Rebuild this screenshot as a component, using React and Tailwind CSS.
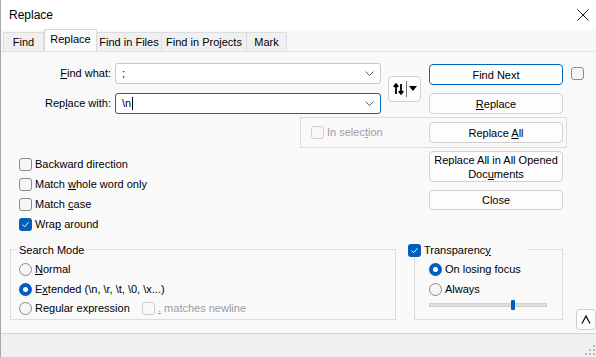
import React from "react";

function Check({ checked, disabled }) {
  if (checked) {
    return (
      <span className="w-[13px] h-[13px] rounded-[3px] bg-[#005fb8] flex items-center justify-center shrink-0">
        <svg width="9" height="9" viewBox="0 0 9 9">
          <path d="M1.5 4.6l2.1 2.1 3.9-4.4" fill="none" stroke="#ffffff" strokeWidth="1" />
        </svg>
      </span>
    );
  }
  return (
    <span
      className={
        disabled
          ? "block w-[13px] h-[13px] rounded-[3px] border border-[#cfcfcf] shrink-0"
          : "block w-[13px] h-[13px] rounded-[3px] border border-[#8a8a8a] bg-[#f6f6f6] shrink-0"
      }
    />
  );
}

function Radio({ on }) {
  if (on) {
    return (
      <span className="w-[13px] h-[13px] rounded-full bg-[#005fb8] flex items-center justify-center shrink-0">
        <span className="w-[5px] h-[5px] rounded-full bg-white" />
      </span>
    );
  }
  return <span className="block w-[13px] h-[13px] rounded-full border border-[#8a8a8a] bg-[#f6f6f6] shrink-0" />;
}

function Btn({ children, className }) {
  return (
    <div
      className={
        "w-[134px] flex items-center justify-center text-center leading-[14px] rounded-[4px] border bg-[#fdfdfd] " +
        className
      }
    >
      {children}
    </div>
  );
}

function Chevron() {
  return (
    <svg width="9" height="5" viewBox="0 0 9 5" className="mr-[6px]">
      <path d="M0.5 0.5l4 4 4-4" fill="none" stroke="#5a5a5a" strokeWidth="1" />
    </svg>
  );
}

function Row({ children }) {
  return <div className="h-[20px] flex items-center gap-[3px]">{children}</div>;
}

export default function App() {
  return (
    <div className="w-[596px] h-[357px] flex flex-col bg-white border-l border-[#a9a9a9] text-[11px] text-black font-['Liberation_Sans',Arial,sans-serif] overflow-hidden">
      {/* title bar */}
      <div className="h-[30px] flex items-center justify-between pl-[8px] pr-[6px] shrink-0">
        <span className="text-[12px]">Replace</span>
        <svg width="12" height="12" viewBox="0 0 12 12" className="mr-[1px]">
          <path d="M0.5 0.5l11 11M11.5 0.5l-11 11" stroke="#1a1a1a" strokeWidth="1" />
        </svg>
      </div>

      {/* tabs */}
      <div className="h-[21px] flex items-end pl-[2px] bg-[#f7f7f7] shrink-0">
        <div className="w-[41px] h-[19px] flex items-center justify-center bg-[#f0f0f0] border border-b-0 border-[#dddddd]">Find</div>
        <div className="w-[53px] h-[22px] flex items-center justify-center bg-[#fbfbfb] border border-b-0 border-[#d8d8d8] pb-[2px]">Replace</div>
        <div className="w-[65px] h-[19px] flex items-center justify-center bg-[#f0f0f0] border border-b-0 border-l-0 border-[#dddddd]">Find in Files</div>
        <div className="w-[85px] h-[19px] flex items-center justify-center bg-[#f0f0f0] border border-b-0 border-l-0 border-[#dddddd]">Find in Projects</div>
        <div className="w-[40px] h-[19px] flex items-center justify-center bg-[#f0f0f0] border border-b-0 border-l-0 border-[#dddddd]">Mark</div>
      </div>

      {/* tab page */}
      <div className="relative flex-1 flex flex-col bg-[#f9f9f9] border-t border-[#e3e3e3]">
        {/* In selection group frame, sits behind Replace All */}
        <div className="absolute left-[299px] top-[65px] w-[267px] h-[31px] border border-[#dcdcdc] flex items-center pl-[10px] gap-[3px] text-[#9d9d9d]">
          <Check disabled />
          <span>
            In selec<u>t</u>ion
          </span>
        </div>

        <div className="flex pt-[11px]">
          <div className="w-[428px]">
            <div className="flex items-center">
              <div className="flex flex-col gap-[9px]">
                <div className="flex items-center">
                  <span className="w-[110px] text-right">
                    <u>F</u>ind what:
                  </span>
                  <div className="ml-[4px] w-[266px] h-[21px] bg-white border border-[#c8c8c8] rounded-[3px] flex items-center justify-between pl-[6px]">
                    <span>;</span>
                    <Chevron />
                  </div>
                </div>
                <div className="flex items-center">
                  <span className="w-[110px] text-right">
                    Rep<u>l</u>ace with:
                  </span>
                  <div className="ml-[4px] w-[266px] h-[21px] bg-white border border-[#0067c0] rounded-[3px] flex items-center justify-between pl-[6px]">
                    <span className="flex items-center">
                      \n<span className="ml-[1px] w-[1px] h-[13px] bg-black" />
                    </span>
                    <Chevron />
                  </div>
                </div>
              </div>
              <div className="ml-[7px] w-[33px] h-[26px] rounded-[4px] border border-[#d0d0d0] bg-[#fdfdfd] flex items-center justify-center gap-[2px]">
                <svg width="11" height="12" viewBox="0 0 11 12">
                  <path d="M3 11V1.5M0.8 3.8L3 1.2l2.2 2.6" fill="none" stroke="#000" strokeWidth="1.8" />
                  <path d="M8 1v9.5M5.8 8.2L8 10.8l2.2-2.6" fill="none" stroke="#000" strokeWidth="1.8" />
                </svg>
                <span className="w-[1px] h-[16px] bg-[#707070]" />
                <svg width="8" height="5" viewBox="0 0 8 5">
                  <path d="M0 0h8L4 5z" fill="#000" />
                </svg>
              </div>
            </div>

            <div className="mt-[40px] pl-[18px] flex flex-col">
              <Row>
                <Check />
                <span>Backward direction</span>
              </Row>
              <Row>
                <Check />
                <span>
                  Match <u>w</u>hole word only
                </span>
              </Row>
              <Row>
                <Check />
                <span>
                  Match <u>c</u>ase
                </span>
              </Row>
              <Row>
                <Check checked />
                <span>
                  Wra<u>p</u> around
                </span>
              </Row>
            </div>
          </div>

          <div className="relative flex flex-col gap-[8px] pt-[1px]">
            <Btn className="h-[21px] border-[#0067c0]">Find Next</Btn>
            <Btn className="h-[21px] border-[#d0d0d0]">
              <span>
                <u>R</u>eplace
              </span>
            </Btn>
            <Btn className="h-[21px] border-[#d0d0d0]">
              <span>
                Replace <u>A</u>ll
              </span>
            </Btn>
            <Btn className="h-[31px] border-[#d0d0d0]">
              <span>
                Replace All in All Opened
                <br />
                Doc<u>u</u>ments
              </span>
            </Btn>
            <Btn className="h-[20px] border-[#d0d0d0]">Close</Btn>
          </div>
          <div className="ml-[8px] mt-[4px]">
            <Check />
          </div>
        </div>

        {/* lower groups */}
        <div className="mt-[15px] flex items-start pl-[9px] h-[81px]">
          <div className="relative w-[386px] h-[71px] border border-[#dcdcdc] pt-[9px] pl-[8px]">
            <span className="absolute -top-[8px] left-[6px] px-[2px] bg-[#f9f9f9]">Search Mode</span>
            <Row>
              <Radio />
              <span>
                <u>N</u>ormal
              </span>
            </Row>
            <Row>
              <Radio on />
              <span>
                E<u>x</u>tended (\n, \r, \t, \0, \x...)
              </span>
            </Row>
            <div className="h-[19px] flex items-center gap-[3px]">
              <Radio />
              <span className="w-[104px]">
                Re<u>g</u>ular expression
              </span>
              <Check disabled />
              <span className="text-[#9d9d9d]">
                <u>.</u> matches newline
              </span>
            </div>
          </div>

          <div className="relative ml-[18px] w-[149px] h-[71px] border border-[#dcdcdc] pt-[9px] pl-[14px]">
            <div className="absolute -top-[7px] -left-[7px] w-[120px] h-[14px] bg-[#f9f9f9] flex items-center gap-[3px]">
              <Check checked />
              <span>
                Transparenc<u>y</u>
              </span>
            </div>
            <Row>
              <Radio on />
              <span>On losing focus</span>
            </Row>
            <Row>
              <Radio />
              <span>Always</span>
            </Row>
            <div className="relative mt-[4px] w-[118px] h-[4px] bg-[#dedede] border border-[#d0d0d0]">
              <span className="absolute left-[81px] -top-[4px] w-[4px] h-[10px] bg-[#005fb8] rounded-[1px]" />
            </div>
          </div>

          <div className="self-end ml-[13px] w-[20px] h-[21px] rounded-[4px] border border-[#d0d0d0] bg-[#fdfdfd] flex items-center justify-center">
            <svg width="10" height="9" viewBox="0 0 10 9">
              <path d="M1 8.5L5 1l4 7.5" fill="none" stroke="#000" strokeWidth="1.2" />
            </svg>
          </div>
        </div>
      </div>

      {/* status strip */}
      <div className="h-[24px] shrink-0 bg-[#f0f0f0] border-t border-[#d6d6d6] flex items-end justify-end pr-[1px] pb-[2px]">
        <svg width="10" height="10" viewBox="0 0 10 10">
          <rect x="8" y="0" width="2" height="2" fill="#b8b8b8" />
          <rect x="4" y="4" width="2" height="2" fill="#b8b8b8" />
          <rect x="8" y="4" width="2" height="2" fill="#b8b8b8" />
          <rect x="0" y="8" width="2" height="2" fill="#b8b8b8" />
          <rect x="4" y="8" width="2" height="2" fill="#b8b8b8" />
          <rect x="8" y="8" width="2" height="2" fill="#b8b8b8" />
        </svg>
      </div>
    </div>
  );
}
